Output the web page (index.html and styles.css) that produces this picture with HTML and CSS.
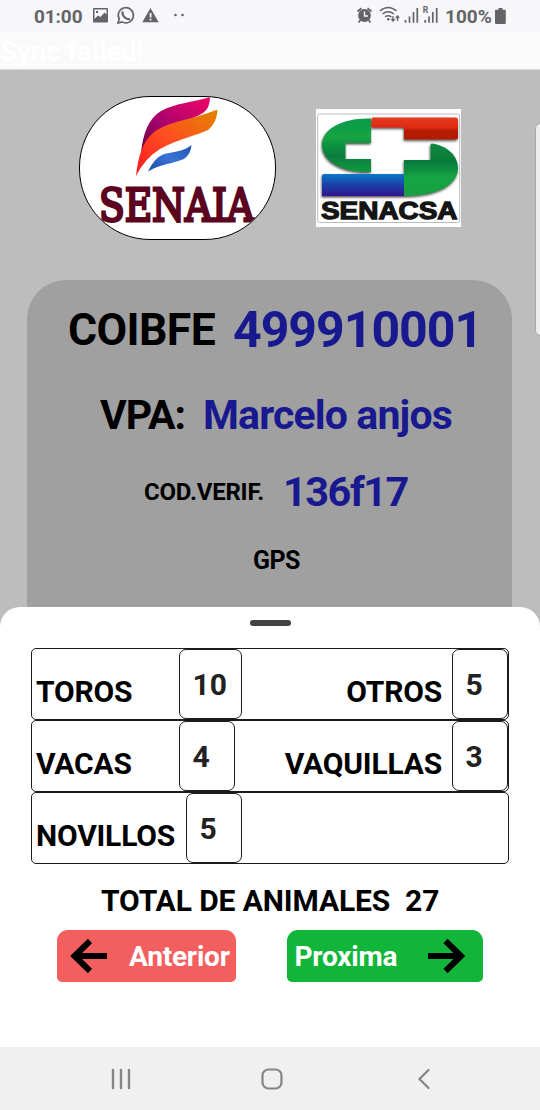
FILE: index.html
```html
<!DOCTYPE html>
<html lang="es">
<head>
<meta charset="utf-8">
<title>COIBFE</title>
<link rel="stylesheet" href="styles.css">
</head>
<body>
<div class="screen">
  <header class="status">
    <span class="clock">01:00</span>
    <svg class="status-left" width="96" height="32" viewBox="90 0 96 32">
      <path fill="#646466" fill-rule="evenodd" d="M94 8h13q1 0 1 1v12.500q0 1-1 1H94q-1 0-1-1V9q0-1 1-1zM94.500 9.500v9.500l3.500-3.500 2.500 1.500 4-4.500 2 2V9.500zM96 11h2v2h-2z"/>
      <path fill="none" stroke="#646466" stroke-width="1.600" d="M118 23l1.200-4a7.600 7.600 0 1 1 2.900 2.900z"/>
      <path fill="none" stroke="#646466" stroke-width="2.200" stroke-linecap="round" d="M122.600 12.300q-.5 2.700 2 5t4.600 1.700"/>
      <path fill="#646466" fill-rule="evenodd" d="M150.500 8l8.200 14.300h-16.400zM149.700 13v4.500h1.800V13zM149.700 18.800v1.800h1.800v-1.800z"/>
      <circle cx="175.500" cy="15" r="1.300" fill="#646466"/><circle cx="182.500" cy="15" r="1.300" fill="#646466"/>
    </svg>
    <svg class="status-right" width="84" height="32" viewBox="355 0 84 32">
      <g fill="none" stroke="#646466">
        <circle cx="364.500" cy="15.500" r="5.200" stroke-width="2.400" fill="#646466"/>
        <path stroke="#f7f7fa" stroke-width="1.400" d="M364.500 11.500v4.500h3.500"/>
        <path stroke-width="1.800" d="M357.500 11.500l4-3.300M371.500 11.500l-4-3.300M360.500 20l-2 2.500M368.500 20l2 2.500"/>
        <path stroke-width="1.500" d="M380 11q8-7 16.500 0M382.500 14q5.500-4.600 11.500 0M385 17q3.300-2.500 6.500 0"/>
        <path stroke-width="1.300" d="M393 16v5M391.300 19l1.700 2 1.700-2M397.500 21v-5M395.800 18l1.700-2 1.700 2"/>
        <path stroke-width="1.700" d="M405.500 20v2.800M409.500 16.500v6.300M413.500 12v10.800M417.300 8v14.800M425.200 20v2.800M429 16.500v6.300M432.800 12v10.800M436.700 8v14.800"/>
      </g>
      <circle cx="388.300" cy="19.200" r="1.300" fill="#646466"/>
      <text x="422.800" y="13" font-family="Roboto" font-weight="700" font-size="8.500" fill="#646466">R</text>
    </svg>
    <span class="percent">100%</span>
    <svg class="battery" width="12" height="16" viewBox="0 0 12 16"><path fill="#646466" d="M3.500 0h4v1.800H10q.8 0 .8.800V15q0 1-1 1H1q-1 0-1-1V2.600q0-.8.800-.8h2.700z"/></svg>
  </header>
  <div class="sync">Sync failed!</div>

  <main class="backdrop">
    <div class="logos">
      <div class="oval">
        <svg width="195" height="142" viewBox="80 97 195 142">
          <defs>
            <linearGradient id="pink" x1="0" x2="1" y1="1" y2="0"><stop offset="0" stop-color="#67003c"/><stop offset=".4" stop-color="#a5046c"/><stop offset="1" stop-color="#f00467"/></linearGradient>
            <linearGradient id="flame" x1="0" x2="1" y1="1" y2="0"><stop offset="0" stop-color="#ff1720"/><stop offset=".45" stop-color="#ff4a22"/><stop offset="1" stop-color="#e48400"/></linearGradient>
            <linearGradient id="azure" x1="0" x2="1" y1="1" y2="0"><stop offset="0" stop-color="#1d48a8"/><stop offset=".5" stop-color="#3a74d5"/><stop offset="1" stop-color="#1f55b4"/></linearGradient>
          </defs>
          <path fill="url(#pink)" d="M210 97Q210 108 203 113C192 120 172 123 157 134Q146 141 141 153C143 134 148 119 161 111C176 103 194 102 210 97z"/>
          <path fill="url(#flame)" d="M217.500 109.500Q217 123 208 130C198 135 178 139 160 149Q145 158 136 176C138 158 142 142 153 133C168 121 192 120 217.500 109.500z"/>
          <path fill="url(#azure)" d="M191.500 145Q191 154 184 159C173 164 162 163 148 171.500Q154 158 164 154C175 152 184 151 191.500 145z"/>
          <text class="slab" x="99" y="221" textLength="155" lengthAdjust="spacingAndGlyphs">SENAIA</text>
        </svg>
      </div>
      <svg class="senacsa" width="145" height="118" viewBox="316 109 145 118">
        <defs>
          <linearGradient id="red" x2="0" y2="1"><stop offset="0" stop-color="#e43a20"/><stop offset=".45" stop-color="#df2a12"/><stop offset=".6" stop-color="#b51a05"/><stop offset="1" stop-color="#b01b06"/></linearGradient>
          <linearGradient id="blue" x2="0" y2="1"><stop offset="0" stop-color="#0877c8"/><stop offset=".5" stop-color="#1b3fa8"/><stop offset="1" stop-color="#31168c"/></linearGradient>
          <linearGradient id="green" x2="0" y2="1"><stop offset="0" stop-color="#07994a"/><stop offset=".35" stop-color="#16a443"/><stop offset=".7" stop-color="#067c3c"/><stop offset="1" stop-color="#0d9a40"/></linearGradient>
          <linearGradient id="green2" x2="0" y2="1"><stop offset="0" stop-color="#0a8a3c"/><stop offset=".35" stop-color="#067a3b"/><stop offset=".65" stop-color="#16a443"/><stop offset="1" stop-color="#13a042"/></linearGradient>
          <filter id="drop" x="-10%" y="-10%" width="120%" height="130%"><feDropShadow dx="-.5" dy="1.500" stdDeviation="1" flood-color="#222" flood-opacity=".8"/></filter>
        </defs>
        <path fill="#fff" d="M316 109h145v118H316z"/>
        <rect x="317.700" y="114" width="142" height="108.500" rx="2" fill="none" stroke="#aaa" stroke-width=".8"/>
        <g filter="url(#drop)">
          <path fill="url(#green)" d="M371 118.500V143H345.500V159H371V172C342 173 322 161 322 145S342 118 371 118.500z"/>
          <path fill="url(#red)" d="M373 117.500h82.500q2.500 0 2.500 2.500v17q0 2.500-2.500 2.500H404V127.500H371.500V119q0-1.500 1.500-1.500z"/>
          <path fill="url(#green2)" d="M432 143.500C448 146 458 156 458 168C458 185 437 196 404 196V160H430.500V145q0-1.500 1.500-1.500z"/>
          <path fill="url(#blue)" d="M324 174h80v22h-82v-20q0-2 2-2z"/>
        </g>
        <text x="321" y="219.300" font-family="Liberation Sans" font-weight="700" font-size="24.500" textLength="136.500" lengthAdjust="spacingAndGlyphs" fill="#151515" stroke="#151515" stroke-width="1.300">SENACSA</text>
      </svg>
    </div>
    <div class="side-tab"></div>
    <section class="card">
      <div class="line line-coibfe"><span class="key">COIBFE</span><span class="value">499910001</span></div>
      <div class="line line-vpa"><span class="key">VPA:</span><span class="value">Marcelo anjos</span></div>
      <div class="line line-code"><span class="key">COD.VERIF.</span><span class="value">136f17</span></div>
      <div class="line line-gps"><span class="key">GPS</span></div>
    </section>
  </main>

  <section class="sheet">
    <div class="handle"></div>
    <div class="table">
      <div class="row"><span class="name first">TOROS</span><span class="count wide">10</span><span class="name second">OTROS</span><span class="count">5</span></div>
      <div class="row"><span class="name first">VACAS</span><span class="count">4</span><span class="name second">VAQUILLAS</span><span class="count">3</span></div>
      <div class="row"><span class="name long">NOVILLOS</span><span class="count">5</span></div>
    </div>
    <div class="total"><span class="total-label">TOTAL DE ANIMALES</span><span class="total-value">27</span></div>
    <div class="buttons">
      <div class="button previous">
        <svg width="38" height="36" viewBox="0 0 38 36"><path fill="none" stroke="#000" stroke-width="6" d="M37 18H5M20 3L4.500 18 20 33"/></svg>
        <span>Anterior</span>
      </div>
      <div class="button next">
        <span>Proxima</span>
        <svg width="38" height="36" viewBox="0 0 38 36"><path fill="none" stroke="#000" stroke-width="6" d="M0 18h32M17.500 3L33 18 17.500 33"/></svg>
      </div>
    </div>
  </section>

  <nav class="nav">
    <svg width="20" height="22" viewBox="0 0 20 22"><path fill="none" stroke="#858585" stroke-width="2.400" stroke-linecap="round" d="M2 2v18M10 2v18M18 2v18"/></svg>
    <svg width="22" height="22" viewBox="0 0 22 22"><rect x="1.500" y="1.500" width="19" height="19" rx="6" fill="none" stroke="#858585" stroke-width="2.200"/></svg>
    <svg width="14" height="22" viewBox="0 0 14 22"><path fill="none" stroke="#858585" stroke-width="2.200" stroke-linecap="round" d="M11.500 2L2.500 11l9 9"/></svg>
  </nav>
</div>
</body>
</html>
```
FILE: styles.css
```css
* { box-sizing: border-box; }
body { margin: 0; font-family: Roboto, sans-serif; font-weight: 700; }
svg { display: block; flex: none; }
span { white-space: nowrap; }
.screen { width: 540px; height: 1110px; display: flex; flex-direction: column; overflow: hidden; background: #fff; }

.status { height: 32px; flex: none; display: flex; align-items: center; background: #f7f7fa; color: #646466; font-size: 19px; padding-left: 34px; }
.clock { width: 56px; letter-spacing: -.1px; }
.status-right { margin-left: 169px; }
.percent { width: 51px; margin-left: 6px; }
.battery { margin-left: -1px; }
.sync { height: 38px; flex: none; background: #fafafa; color: #fff; font-size: 27.500px; line-height: 39px; border-bottom: 1px solid #d8d8d8; }

.backdrop { position: relative; height: 557px; flex: none; background: #bdbdbd; padding: 26px 28px 0 27px; }
.logos { display: flex; align-items: flex-start; height: 184px; padding-left: 52px; }
.oval { width: 197px; height: 144px; border: 1px solid #000; border-radius: 71px; overflow: hidden; background: #fff; }
.slab { font-family: "DejaVu Serif", serif; font-weight: 400; font-size: 44px; fill: #5b0521; stroke: #5b0521; stroke-width: 2.800px; }
.senacsa { margin: 13px 0 0 40px; }
.side-tab { position: absolute; right: -6px; top: 53px; width: 11px; height: 213px; border-radius: 6px; background: #ececec; border: 1px solid #a9a9a9; }
.card { height: 347px; background: #a0a0a0; border-radius: 39px 39px 0 0; }
.line { display: flex; align-items: flex-start; }
.key { color: #000; flex: none; }
.value { color: #18188f; }
.line-coibfe { height: 90px; padding-left: 41px; line-height: 100px; }
.line-coibfe .key { width: 165px; font-size: 44.500px; letter-spacing: -.6px; }
.line-coibfe .value { font-size: 50px; letter-spacing: -1px; }
.line-vpa { height: 80px; padding-left: 73px; line-height: 90px; font-size: 41px; letter-spacing: -.85px; }
.line-vpa .key { width: 103px; letter-spacing: -1px; }
.line-code { height: 75px; padding-left: 117px; line-height: 84px; }
.line-code .key { width: 139px; font-size: 24px; letter-spacing: -.2px; }
.line-code .value { font-size: 41.500px; letter-spacing: -1.500px; }
.line-gps { padding-left: 226px; line-height: 71px; font-size: 25px; letter-spacing: -.6px; }

.sheet { position: relative; height: 440px; flex: none; background: #fff; border-radius: 20px 20px 0 0; margin-top: -20px; padding-top: 13px; }
.handle { width: 41px; height: 6px; border-radius: 3px; background: #424242; margin-left: 250px; }
.table { margin: 22px 31px 0 31px; height: 216px; }
.row { display: flex; height: 72px; border: 1.500px solid #1b1b1e; border-radius: 5px; font-size: 30px; }
.name { color: #000; line-height: 86px; letter-spacing: -.2px; }
.first { width: 147px; padding-left: 4px; }
.long { width: 154px; padding-left: 4px; }
.second { flex: 1; text-align: right; padding-right: 10px; }
.count { width: 56px; height: 70px; border: 1.500px solid #1b1b1e; border-radius: 7px; color: #222; padding-left: 12.500px; line-height: 70px; font-size: 30px; }
.wide { width: 63px; }
.total { height: 66px; padding-left: 101px; display: flex; line-height: 74px; font-size: 30px; }
.total-label { width: 304px; letter-spacing: -.1px; }
.buttons { display: flex; padding-left: 57px; gap: 51px; }
.button { height: 52px; border-radius: 11px 11px 5px 5px; display: flex; align-items: center; color: #fff; font-size: 28px; letter-spacing: -.2px; }
.previous { width: 179px; background: #f35f5f; padding-left: 13px; gap: 21px; }
.next { width: 196px; background: #10b53a; padding-left: 7.500px; justify-content: space-between; padding-right: 17px; }

.nav { height: 63px; flex: none; background: #f0f0f0; display: flex; align-items: center; padding-left: 111px; }
.nav svg:nth-child(2) { margin-left: 130px; }
.nav svg:nth-child(3) { margin-left: 134px; }
```
